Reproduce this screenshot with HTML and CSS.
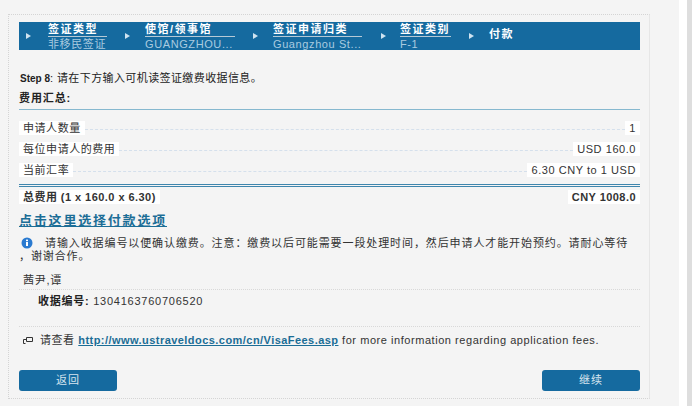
FILE: index.html
```html
<!DOCTYPE html>
<html lang="zh">
<head>
<meta charset="utf-8">
<title>Step 8</title>
<link rel="stylesheet" href="styles.css">
</head>
<body>
<div class="shell">
  <main class="main">
    <div class="panel">
      <nav class="steps">
        <div class="step s1"><span class="arrow"></span><div class="step-text"><b>签证类型</b><span>非移民签证</span></div></div>
        <div class="step s2"><span class="arrow"></span><div class="step-text"><b>使馆/领事馆</b><span>GUANGZHOU...</span></div></div>
        <div class="step s3"><span class="arrow"></span><div class="step-text"><b>签证申请归类</b><span>Guangzhou St...</span></div></div>
        <div class="step s4"><span class="arrow"></span><div class="step-text"><b>签证类别</b><span>F-1</span></div></div>
        <div class="step s5"><span class="arrow"></span><strong>付款</strong></div>
      </nav>
      <p class="intro"><b class="step-label">Step 8</b>: 请在下方输入可机读签证缴费收据信息。</p>
      <h2 class="summary-title">费用汇总:</h2>
      <div class="rows">
        <div class="row"><span class="cell">申请人数量</span><span class="dash"></span><span class="cell">1</span></div>
        <div class="row"><span class="cell">每位申请人的费用</span><span class="dash"></span><span class="cell">USD 160.0</span></div>
        <div class="row"><span class="cell">当前汇率</span><span class="dash"></span><span class="cell">6.30 CNY to 1 USD</span></div>
      </div>
      <div class="total"><span class="cell">总费用 (1 x 160.0 x 6.30)</span><span class="cell">CNY 1008.0</span></div>
      <a class="pay-link" href="#">点击这里选择付款选项</a>
      <p class="info">
        <svg class="info-icon" width="12" height="12" viewBox="0 0 12 12"><circle cx="6" cy="6" r="5.5" fill="#2a7ad0"/><rect x="5" y="5" width="2" height="4" fill="#fff"/><rect x="5" y="2.600" width="2" height="1.600" fill="#fff"/></svg>请输入收据编号以便确认缴费。注意：缴费以后可能需要一段处理时间，然后申请人才能开始预约。请耐心等待<br>，谢谢合作。
      </p>
      <div class="name">茜尹,谭</div>
      <div class="receipt"><b>收据编号:</b> 1304163760706520</div>
      <p class="note">
        <svg class="note-icon" width="10" height="7" viewBox="0 0 10 7"><path d="M3.500 .5h6v4h-6zM.5 2.500h3M.5 2.500v4h2" fill="none" stroke="#333"/></svg>请查看 <a href="#">http://www.ustraveldocs.com/cn/VisaFees.asp</a> for more information regarding application fees.
      </p>
      <div class="actions"><a class="btn" href="#">返回</a><a class="btn" href="#">继续</a></div>
    </div>
  </main>
  <div class="gap"></div>
  <div class="scroll"></div>
</div>
</body>
</html>
```
FILE: styles.css
```css
* { box-sizing: border-box; }
html, body { margin: 0; height: 100%; }
body {
  font-family: "Liberation Sans", "Noto Sans CJK SC", sans-serif;
  font-size: 11px;
  color: #333;
  letter-spacing: .55px;
  overflow: hidden;
}
.shell { display: flex; height: 406px; }
.main { width: 679px; background: #f4f4f4; padding: 14px 0 0 8px; }
.gap { width: 8px; background: #fff; }
.scroll { flex: 1; background: #dedede; }
.panel {
  width: 642px;
  height: 385px;
  border: 1px dotted #d4d4d4;
  border-right: 1px solid #e6e6e6;
  padding: 7px 9px 0 10px;
}
.steps {
  display: flex;
  align-items: flex-start;
  height: 28px;
  background: #156a9f;
  color: #fff;
  margin-bottom: 22px;
}
.step { display: flex; flex: none; }
.s1 { width: 99px; }
.s2 { width: 128px; }
.s3 { width: 128px; }
.s4 { width: 88px; }
.arrow {
  flex: none;
  width: 0;
  height: 0;
  margin: 11px 0 0 7px;
  border-left: 5px solid #cfe3f0;
  border-top: 3.500px solid transparent;
  border-bottom: 3.500px solid transparent;
}
.step-text { display: flex; flex-direction: column; margin-left: 15px; width: 90px; line-height: 13px; padding-top: 1px; }
.s1 .step-text { margin-left: 17px; width: 59px; }
.s3 .step-text { width: 89px; }
.s4 .step-text { margin-left: 14px; width: 51px; }
.step-text b { border-bottom: 1px solid #b6c9d6; height: 14px; letter-spacing: 1.500px; white-space: nowrap; }
.step-text span { color: #a9cbe0; white-space: nowrap; letter-spacing: .6px; padding-top: 1px; }
.s5 strong { margin: 5px 0 0 15px; letter-spacing: 1.500px; line-height: 14px; }
.intro { margin: 0 0 7px; height: 13px; line-height: 13px; padding-left: 1px; color: #222; letter-spacing: .4px; }
.step-label { font-size: 10px; letter-spacing: 0; }
.summary-title {
  margin: 0;
  height: 18px;
  font-size: 11px;
  line-height: 13px;
  font-weight: bold;
  letter-spacing: .9px;
  color: #222;
  border-bottom: 1px solid #86b8cf;
}
.rows { padding-top: 7px; }
.row { display: flex; align-items: center; height: 21px; }
.cell { background: #fff; padding: 0 4px; line-height: 14px; height: 14px; white-space: nowrap; }
.dash { flex: 1; border-bottom: 1px dashed #d5e0ec; margin-top: 3px; }
.total {
  display: flex;
  justify-content: space-between;
  margin-top: 4px;
  padding-top: 3px;
  height: 20px;
  border-top: 3px double #3f86ad;
  font-weight: bold;
  letter-spacing: .45px;
}
.pay-link {
  display: block;
  margin-top: 9px;
  font-size: 13px;
  line-height: 15px;
  letter-spacing: 1.800px;
  font-weight: bold;
  color: #1b6d96;
  white-space: nowrap;
  width: 148px;
}
.info { margin: 9px 0 0; line-height: 13px; letter-spacing: .9px; }
.info-icon { vertical-align: -2px; margin: 0 12px 0 2px; }
.name { margin-top: 7px; height: 20px; line-height: 14px; padding: 3px 4px 0; border-bottom: 1px dotted #d8d8d8; letter-spacing: .75px; }
.receipt { height: 37px; padding: 4px 0 0 19px; line-height: 14px; border-bottom: 1px dotted #d8d8d8; letter-spacing: .75px; }
.receipt b { color: #222; }
.note { margin: 7px 0 0; line-height: 13px; padding-left: 4px; }
.note-icon { margin-right: 7px; }
.note a { color: #1b6d96; font-weight: bold; letter-spacing: .45px; }
.actions { display: flex; justify-content: space-between; margin-top: 23px; }
.btn {
  width: 98px;
  height: 21px;
  line-height: 20px;
  background: #156a9f;
  border-radius: 3px;
  color: #d5e5ef;
  text-align: center;
  text-decoration: none;
  letter-spacing: 1px;
}
```
